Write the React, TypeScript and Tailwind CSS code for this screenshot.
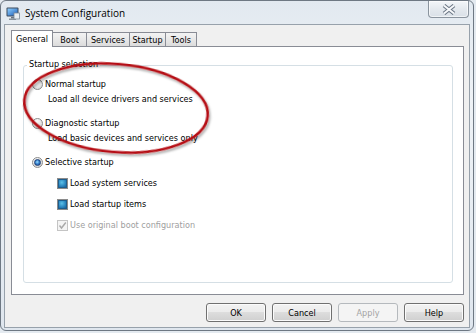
import React from "react";

const ui = "font-['DejaVu_Sans_Condensed','Liberation_Sans',sans-serif] text-[9px] leading-[14px]";

const Radio = ({ checked }: { checked?: boolean }) => (
  <span className="w-[11px] h-[11px] shrink-0 rounded-full border border-[#8b8b8b] bg-[radial-gradient(circle_at_35%_30%,#ffffff,#e6e6e6_55%,#c9c9c9)] flex items-center justify-center">
    {checked && (
      <span className="w-[7px] h-[7px] rounded-full border border-[#1d3f77] bg-[radial-gradient(circle_at_45%_40%,#9fe0ff,#3a86d0_45%,#173f86)]" />
    )}
  </span>
);

const Check = ({ mixed }: { mixed?: boolean }) => (
  <span
    className={
      "w-[11px] h-[11px] shrink-0 border flex items-center justify-center " +
      (mixed ? "border-[#8b8b8b] bg-white" : "border-[#c4c4c4] bg-[#f4f4f4]")
    }
  >
    {mixed ? (
      <span className="w-[9px] h-[9px] border border-[#1f5d8c] bg-[radial-gradient(circle_at_40%_35%,#5cc0e8,#2a86bf_60%,#1b5f96)]" />
    ) : (
      <svg width="9" height="9" viewBox="0 0 9 9">
        <path d="M1.5 4.5 L3.5 7 L7.8 1.5" fill="none" stroke="#a9a9a9" strokeWidth="1.4" />
      </svg>
    )}
  </span>
);

const tabs = [
  { label: "General", w: "w-[42px]", active: true },
  { label: "Boot", w: "w-[35px]" },
  { label: "Services", w: "w-[44px]" },
  { label: "Startup", w: "w-[37px]" },
  { label: "Tools", w: "w-[32px]" },
];

const Button = ({ label, disabled }: { label: string; disabled?: boolean }) => (
  <button
    className={
      "w-[60px] h-[19px] rounded-[3px] border " +
      ui +
      (disabled
        ? " border-[#b5b9bd] bg-[#f4f4f4] text-[#a3a3a3]"
        : " border-[#707070] bg-[linear-gradient(#f2f2f2,#ebebeb_50%,#dddddd_50%,#cfcfcf)] text-black shadow-[inset_0_0_0_1px_#fbfbfb]")
    }
  >
    {label}
  </button>
);

export default function App() {
  return (
    <div className="relative w-[476px] h-[333px] overflow-hidden bg-[#e4eaf0]">
      <div className="w-[474px] h-[331px] border border-[#6e7883] rounded-[6px] bg-[linear-gradient(180deg,#e2e9f0,#eef2f6_30%,#e6ecf2_70%,#dfe6ee)] flex flex-col px-[3px] pb-[3px]">
        <div className="h-[23px] shrink-0 flex items-start">
          <svg className="mt-[6px] ml-[2px]" width="14" height="14" viewBox="0 0 14 14">
            <rect x="0.5" y="0.5" width="12" height="9" rx="1" fill="#3c4a5c" />
            <rect x="1.5" y="1.5" width="10" height="7" fill="url(#scr)" />
            <rect x="5" y="10" width="3" height="1.5" fill="#6a737d" />
            <rect x="3" y="11.5" width="7" height="1.5" fill="#8a939c" />
            <rect x="8" y="6" width="5.5" height="6" fill="#e9eef2" stroke="#7b8794" strokeWidth="0.8" />
            <defs>
              <linearGradient id="scr" x1="0" y1="0" x2="1" y2="1">
                <stop offset="0" stopColor="#8fd0ff" />
                <stop offset="1" stopColor="#1f5fb8" />
              </linearGradient>
            </defs>
          </svg>
          <span className="ml-[5px] h-[23px] leading-[24px] text-[10px] text-black font-['Open_Sans','Liberation_Sans',sans-serif]">
            System Configuration
          </span>
          <div className="ml-auto mr-[1px] w-[41px] h-[17px] rounded-b-[4px] border border-t-0 border-[#8a949e] bg-[linear-gradient(#f3f6f9,#e4e9ee_50%,#d9e0e7)] shadow-[inset_0_0_0_1px_rgba(255,255,255,0.6)] flex items-center justify-center">
            <svg width="14" height="11" viewBox="0 0 14 11">
              <path d="M2 1.5 L12 9.5 M12 1.5 L2 9.5" stroke="#6b7785" strokeWidth="4" />
              <path d="M2 1.5 L12 9.5 M12 1.5 L2 9.5" stroke="#f7f9fb" strokeWidth="2" />
            </svg>
          </div>
        </div>

        <div className={"flex-1 bg-[#f0f0f0] border border-[#97a1ab] flex flex-col pl-[6px] pr-[5px] pt-[5px] pb-[5px] text-black " + ui}>
          <div className="h-[16px] flex items-end shrink-0">
            {tabs.map((t, i) => (
              <div
                key={t.label}
                className={
                  t.w +
                  " flex items-center justify-center border border-b-0 border-[#898c95] " +
                  (i > 0 ? "-ml-px " : "") +
                  (t.active
                    ? "relative z-10 h-[17px] -mb-px bg-white"
                    : "h-[14px] bg-[linear-gradient(#f3f3f3,#e8e8e8_50%,#dcdcdc)]")
                }
              >
                {t.label}
              </div>
            ))}
          </div>

          <div className="h-[249px] shrink-0 bg-white border border-[#898c95] pt-[18px] pl-[11px] pr-[10px] pb-[11px]">
            <div className="relative h-full border border-[#d5dfe5] rounded-[3px] pt-[11px] pl-[8px] text-black">
              <span className="absolute left-[3px] top-[-8px] px-[2px] bg-white leading-[13px]">Startup selection</span>
              <div className="h-[14px] flex items-center gap-[2px]">
                <Radio />
                <span>Normal startup</span>
              </div>
              <div className="h-[14px] mt-[1px] pl-[16px] flex items-center">Load all device drivers and services</div>
              <div className="h-[14px] mt-[10px] flex items-center gap-[2px]">
                <Radio />
                <span>Diagnostic startup</span>
              </div>
              <div className="h-[14px] mt-[1px] pl-[16px] flex items-center">Load basic devices and services only</div>
              <div className="h-[14px] mt-[10px] flex items-center gap-[2px]">
                <Radio checked />
                <span>Selective startup</span>
              </div>
              <div className="h-[14px] mt-[7px] pl-[25px] flex items-center gap-[2px]">
                <Check mixed />
                <span>Load system services</span>
              </div>
              <div className="h-[14px] mt-[7px] pl-[25px] flex items-center gap-[2px]">
                <Check mixed />
                <span>Load startup items</span>
              </div>
              <div className="h-[14px] mt-[7px] pl-[25px] flex items-center gap-[2px] text-[#a0a0a0]">
                <Check />
                <span>Use original boot configuration</span>
              </div>
            </div>
          </div>

          <div className="mt-[8px] flex justify-end gap-[6px]">
            <Button label="OK" />
            <Button label="Cancel" />
            <Button label="Apply" disabled />
            <Button label="Help" />
          </div>
        </div>
      </div>

      <svg className="absolute inset-0 pointer-events-none" width="476" height="333" viewBox="0 0 476 333">
        <defs>
          <filter id="sh" x="-20%" y="-20%" width="140%" height="140%">
            <feDropShadow dx="1.5" dy="2" stdDeviation="1.2" floodColor="#000" floodOpacity="0.35" />
          </filter>
        </defs>
        <ellipse
          cx="116"
          cy="108"
          rx="92"
          ry="44"
          transform="rotate(5 116 108)"
          fill="none"
          stroke="#b50d12"
          strokeWidth="2.6"
          filter="url(#sh)"
        />
      </svg>
    </div>
  );
}
